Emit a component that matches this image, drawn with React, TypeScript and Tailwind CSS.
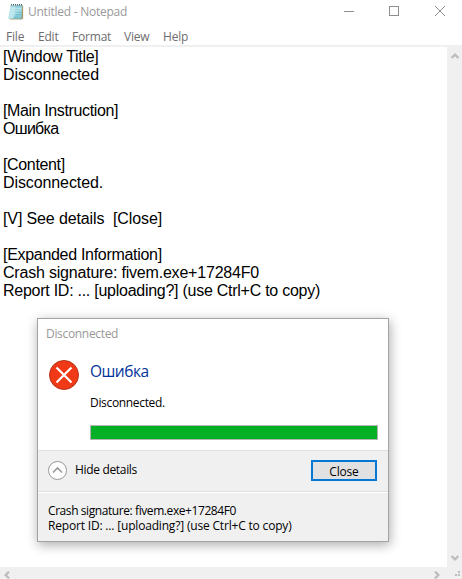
const NOTE_LINES = [
  { text: '[Window Title]', cls: 'tracking-[-0.29px]' },
  { text: 'Disconnected', cls: 'tracking-[-0.08px]' },
  { text: '', cls: '' },
  { text: '[Main Instruction]', cls: 'tracking-[-0.38px]' },
  { text: 'Ошибка', cls: 'tracking-[-0.7px]' },
  { text: '', cls: '' },
  { text: '[Content]', cls: 'tracking-[-0.35px]' },
  { text: 'Disconnected.', cls: 'tracking-[-0.1px]' },
  { text: '', cls: '' },
  { text: '[V] See details  [Close]', cls: 'tracking-[-0.12px]' },
  { text: '', cls: '' },
  { text: '[Expanded Information]', cls: 'tracking-[-0.3px]' },
  { text: 'Crash signature: fivem.exe+17284F0', cls: 'tracking-[-0.2px]' },
  { text: 'Report ID: ... [uploading?] (use Ctrl+C to copy)', cls: 'tracking-[-0.26px]' },
]

const MENU = [
  { label: 'File', cls: 'w-8' },
  { label: 'Edit', cls: 'w-[34px]' },
  { label: 'Format', cls: 'w-[52px]' },
  { label: 'View', cls: 'w-[39px]' },
  { label: 'Help', cls: 'w-8' },
]

function NotepadIcon() {
  return (
    <svg width="16" height="17" viewBox="0 0 16 17" className="shrink-0">
      <path d="M3.5 1.5h11.6v13l-1.2 1H1.6z" fill="#a99a68" />
      <path d="M2.8 1h11.4l-1 13.4H.4z" fill="#9ad6e2" />
      <path d="M2.8 1h5.2L5.2 14.4H.4z" fill="#b9e5ec" />
      <path d="M9.5 8l4.3-1-.6 7.4H5z" fill="#72bfd0" />
      <path d="M2.8 4.5h11M2.4 7h11.2M2 9.5h11.2M1.6 12h11.4" stroke="#d5eff3" strokeWidth=".5" />
      <path d="M3 .8h12" stroke="#48656b" strokeWidth="1.6" strokeDasharray="1 1" />
      <path d="M3 1.9h11.5" stroke="#7ca5ae" strokeWidth=".7" />
    </svg>
  )
}

function CaptionButtons() {
  return (
    <svg width="118" height="24" viewBox="0 0 118 24" fill="none" stroke="#8e8e8e" shapeRendering="crispEdges">
      <path d="M0 11.5h10" />
      <rect x="45.5" y="6.5" width="9" height="9" />
      <path d="M91 6l10 10M101 6l-10 10" shapeRendering="auto" />
    </svg>
  )
}

function Chevron({ className }: { className: string }) {
  return (
    <svg width="8" height="6" viewBox="0 0 8 6" fill="none" stroke="#bcbcbc" strokeWidth="2.2" className={className}>
      <path d="M.6 5L4 1.6 7.4 5" />
    </svg>
  )
}

function ErrorIcon() {
  return (
    <svg width="30" height="30" viewBox="0 0 30 30" className="shrink-0">
      <circle cx="15" cy="15" r="14.5" fill="#f03a17" stroke="#b5331c" />
      <path d="M7.5 7.5l15 15M22.5 7.5l-15 15" stroke="#fff" strokeWidth="2.2" />
    </svg>
  )
}

function DialogText({ text, className }: { text: string; className: string }) {
  return <span className={`whitespace-pre text-xs leading-[15px] text-black ${className}`}>{text}</span>
}

function TaskDialog() {
  return (
    <div className="absolute top-[318px] left-[37px] flex h-[224px] w-[352px] flex-col border border-[#a3a3a3] bg-white shadow-[1px_3px_11px_rgba(0,0,0,0.33)]">
      <div className="h-[30px] shrink-0 pt-[7px] pl-2 text-xs leading-4 tracking-[-0.32px] text-[#999]">Disconnected</div>
      <div className="flex h-[101px] shrink-0 pt-[11px] pl-[11px]">
        <ErrorIcon />
        <div className="ml-[11px] flex flex-col">
          <span className="h-[35px] text-[15.5px] leading-[22px] tracking-[-0.5px] text-[#003399]">Ошибка</span>
          <DialogText text="Disconnected." className="tracking-[-0.33px]" />
          <div className="mt-[15px] h-[15px] w-[288px] border border-[#b4b4b4] bg-[#06b025]" />
        </div>
      </div>
      <div className="flex h-[42px] shrink-0 border-y border-[#dfdfdf] bg-[#f0f0f0] pr-[11px] pl-[10px]">
        <svg width="19" height="19" viewBox="0 0 19 19" fill="none" stroke="#999" className="mt-[10px]">
          <circle cx="9.5" cy="9.5" r="9" fill="#fff" />
          <path d="M5 11.5L9.5 7l4.5 4.5" strokeWidth="1.6" />
        </svg>
        <div className="mt-[11px] ml-2 flex flex-1 items-start">
          <DialogText text="Hide details" className="tracking-[-0.33px]" />
        </div>
        <button className="mt-[9px] flex h-[21px] w-[66px] justify-center border-2 border-[#0078d7] bg-[#e1e1e1] pt-[2px]">
          <DialogText text="Close" className="tracking-[-0.2px]" />
        </button>
      </div>
      <div className="flex flex-1 flex-col border-t border-white bg-[#f0f0f0] pt-[10px] pl-[10px]">
        <DialogText text="Crash signature: fivem.exe+17284F0" className="tracking-[-0.42px]" />
        <DialogText text="Report ID: ... [uploading?] (use Ctrl+C to copy)" className="tracking-[-0.18px]" />
      </div>
    </div>
  )
}

export default function App() {
  return (
    <div className="relative flex h-[579px] w-[462px] flex-col overflow-hidden bg-white font-['Open_Sans','Noto_Sans',sans-serif]">
      <header className="flex h-6 shrink-0 items-center pl-2">
        <NotepadIcon />
        <span className="ml-1 flex-1 text-xs tracking-[-0.25px] text-[#999]">Untitled - Notepad</span>
        <CaptionButtons />
      </header>
      <nav className="flex h-[21px] shrink-0 items-center pt-[5px] pl-[6px] text-xs tracking-[-0.2px] text-[#6d6d6d]">
        {MENU.map((m) => (
          <span key={m.label} className={m.cls}>
            {m.label}
          </span>
        ))}
      </nav>
      <div className="flex flex-1 border-t-2 border-[#f0f0f0]">
        <main className="flex-1 pt-px pl-[3px] font-['Liberation_Sans',Arial,sans-serif] text-base leading-[18px] text-black">
          {NOTE_LINES.map((line, i) => (
            <div key={i} className="h-[18px] whitespace-pre">
              <span className={line.cls}>{line.text}</span>
            </div>
          ))}
        </main>
        <div className="flex w-[15px] flex-col items-center justify-between bg-[#f0f0f0] pt-[6px] pb-[6px]">
          <Chevron className="" />
          <Chevron className="rotate-180" />
        </div>
      </div>
      <footer className="flex h-3 shrink-0 items-center bg-[#f0f0f0] pt-[3px] pl-[3px]">
        <Chevron className="-rotate-90" />
        <span className="flex-1" />
        <Chevron className="mr-[13px] rotate-90" />
        <svg width="7" height="7" viewBox="0 0 7 7" fill="#bcbcbc" className="mr-px">
          <path d="M4 0h2v2h-2zM4 3h2v2h-2zM1 3h2v2h-2z" />
        </svg>
      </footer>
      <TaskDialog />
    </div>
  )
}
